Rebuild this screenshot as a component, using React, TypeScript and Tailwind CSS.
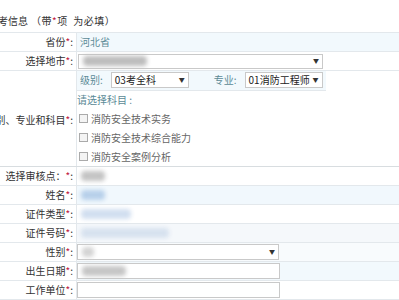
import React from "react";

const font = { fontFamily: '"Noto Sans CJK SC", "Liberation Sans", sans-serif' };

const Label = ({ text, extra }: { text: string; extra?: string }) => (
  <div className="w-[76px] shrink-0 flex justify-end items-center pr-[3px] bg-white">
    <span className="whitespace-nowrap text-[#333]">
      {text}
      {extra}
      <span className="text-[#c0143c]">*</span>:
    </span>
  </div>
);

const Row = ({
  label,
  extra,
  tint,
  children,
}: {
  label: string;
  extra?: string;
  tint?: string;
  children?: React.ReactNode;
}) => (
  <div className="flex h-[19px] border-b border-[#e3e8ec]">
    <Label text={label} extra={extra} />
    <div className={`flex-1 flex items-center border-l border-[#e3e8ec] ${tint ?? "bg-white"}`}>{children}</div>
  </div>
);

const Caret = () => <span className="text-[6px] text-[#333] leading-none">▼</span>;

const Smudge = ({ w, color }: { w: string; color: string }) => (
  <div className={`h-[10px] ${w} ${color} rounded-sm blur-[2px] ml-[4px]`} />
);

const Check = ({ text }: { text: string }) => (
  <div className="flex items-center h-[19px] pl-[2px] text-[#666] whitespace-nowrap">
    <span className="w-[9px] h-[9px] border border-[#aaa] bg-[#f4f4f4] mr-[3px]" />
    {text}
  </div>
);

export default function App() {
  return (
    <div className="w-[399px] h-[300px] overflow-hidden bg-white text-[10px] leading-none" style={font}>
      <div className="h-[33px] flex items-center justify-start pt-[10px] border-b border-[#e3e8ec]">
        <span className="whitespace-nowrap -ml-[12px] text-[#333] flex items-center">
          <span>报考信息</span>
          <span className="ml-[3px] tracking-[0.5px]">
            （带<span className="text-[#c0143c]">*</span>项&nbsp;&nbsp;为必填）
          </span>
        </span>
      </div>

      <Row label="省份" tint="bg-[#f2f9fd]">
        <span className="pl-[3px] text-[#5b8a96]">河北省</span>
      </Row>

      <Row label="选择地市">
        <div className="ml-[1px] w-[245px] h-[15px] border border-[#c9c9c9] bg-white flex items-center justify-between pr-[3px]">
          <Smudge w="w-[64px]" color="bg-[#bdbdbd]" />
          <Caret />
        </div>
      </Row>

      <div className="flex h-[96px] border-b border-[#d8dde0]">
        <div className="w-[76px] shrink-0 flex justify-end items-center pr-[3px] pt-[2px] bg-white">
          <span className="whitespace-nowrap text-[#333]">
            报考级别、专业和科目<span className="text-[#c0143c]">*</span>:
          </span>
        </div>
        <div className="flex-1 flex flex-col border-l border-[#e3e8ec]">
          <div className="h-[20px] w-[249px] flex items-center bg-[#f2f9fd] border-b border-[#e3e8ec] whitespace-nowrap">
            <span className="pl-[3px] text-[#5b8a96]">级别:</span>
            <div className="ml-[8px] w-[78px] h-[16px] border border-[#c9c9c9] bg-white flex items-center justify-between px-[3px] text-[#222]">
              <span>03考全科</span>
              <Caret />
            </div>
            <span className="ml-[25px] text-[#5b8a96]">专业:</span>
            <div className="ml-[8px] w-[78px] h-[16px] border border-[#c9c9c9] bg-white flex items-center justify-between px-[3px] text-[#222]">
              <span>01消防工程师</span>
              <Caret />
            </div>
          </div>
          <div className="h-[19px] flex items-center text-[#5b8a96] whitespace-nowrap">请选择科目 :</div>
          <Check text="消防安全技术实务" />
          <Check text="消防安全技术综合能力" />
          <Check text="消防安全案例分析" />
        </div>
      </div>

      <Row label="选择审核点" extra="：">
        <Smudge w="w-[24px]" color="bg-[#c4c4c4]" />
      </Row>
      <Row label="姓名" tint="bg-[#f1f8fd]">
        <Smudge w="w-[24px]" color="bg-[#b7d0ea]" />
      </Row>
      <Row label="证件类型">
        <Smudge w="w-[50px]" color="bg-[#d2dff0]" />
      </Row>
      <Row label="证件号码" tint="bg-[#f5f8fb]">
        <Smudge w="w-[88px]" color="bg-[#d7e2ef]" />
      </Row>
      <Row label="性别" tint="bg-[#f8fbfd]">
        <div className="w-[202px] h-[16px] border border-[#c9c9c9] bg-white flex items-center justify-between pr-[3px]">
          <Smudge w="w-[12px]" color="bg-[#d4d4d4]" />
          <Caret />
        </div>
      </Row>
      <Row label="出生日期" tint="bg-[#f2f9fd]">
        <div className="w-[203px] h-[16px] border border-[#c9c9c9] bg-white flex items-center">
          <Smudge w="w-[44px]" color="bg-[#c6c6c6]" />
        </div>
      </Row>
      <Row label="工作单位">
        <div className="w-[203px] h-[16px] border border-[#c9c9c9] bg-white" />
      </Row>
    </div>
  );
}
